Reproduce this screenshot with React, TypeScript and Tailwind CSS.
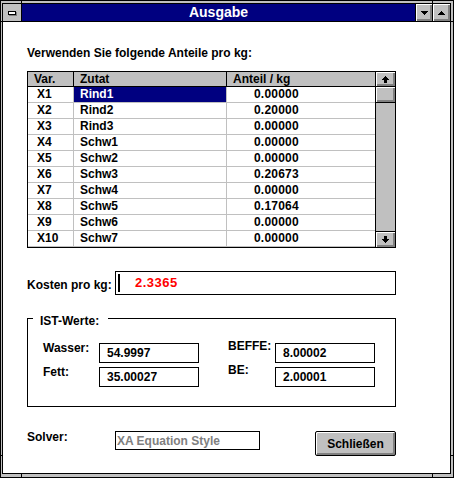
import React from "react";

const rows: [string, string, string][] = [
  ["X1", "Rind1", "0.00000"],
  ["X2", "Rind2", "0.20000"],
  ["X3", "Rind3", "0.00000"],
  ["X4", "Schw1", "0.00000"],
  ["X5", "Schw2", "0.00000"],
  ["X6", "Schw3", "0.20673"],
  ["X7", "Schw4", "0.00000"],
  ["X8", "Schw5", "0.17064"],
  ["X9", "Schw6", "0.00000"],
  ["X10", "Schw7", "0.00000"],
];

function ArrowUp() {
  return (
    <svg width="7" height="7" viewBox="0 0 7 7" shapeRendering="crispEdges">
      <rect x="3" y="0" width="1" height="1" fill="#000" />
      <rect x="2" y="1" width="3" height="1" fill="#000" />
      <rect x="1" y="2" width="5" height="1" fill="#000" />
      <rect x="0" y="3" width="7" height="1" fill="#000" />
      <rect x="2" y="4" width="3" height="3" fill="#000" />
    </svg>
  );
}

function ArrowDown() {
  return (
    <svg width="7" height="7" viewBox="0 0 7 7" shapeRendering="crispEdges">
      <rect x="2" y="0" width="3" height="3" fill="#000" />
      <rect x="0" y="3" width="7" height="1" fill="#000" />
      <rect x="1" y="4" width="5" height="1" fill="#000" />
      <rect x="2" y="5" width="3" height="1" fill="#000" />
      <rect x="3" y="6" width="1" height="1" fill="#000" />
    </svg>
  );
}

function TriDown() {
  return (
    <svg width="7" height="4" viewBox="0 0 7 4" shapeRendering="crispEdges">
      <rect x="0" y="0" width="7" height="1" fill="#000" />
      <rect x="1" y="1" width="5" height="1" fill="#000" />
      <rect x="2" y="2" width="3" height="1" fill="#000" />
      <rect x="3" y="3" width="1" height="1" fill="#000" />
    </svg>
  );
}

function TriUp() {
  return (
    <svg width="7" height="4" viewBox="0 0 7 4" shapeRendering="crispEdges">
      <rect x="3" y="0" width="1" height="1" fill="#000" />
      <rect x="2" y="1" width="3" height="1" fill="#000" />
      <rect x="1" y="2" width="5" height="1" fill="#000" />
      <rect x="0" y="3" width="7" height="1" fill="#000" />
    </svg>
  );
}

const bevel =
  "bg-[#c0c0c0] shadow-[inset_1px_1px_0_#ffffff,inset_-1px_-1px_0_#808080,inset_-2px_-2px_0_#808080]";

export default function App() {
  return (
    <div className="relative w-[454px] h-[478px] border border-black bg-[#c0c0c0] pt-[2px] pl-[1px] pr-[2px] pb-[3px] font-['Liberation_Sans',Arial,sans-serif] font-bold text-[12px] leading-[14px] text-black">
      {/* frame ticks */}
      <div className="absolute left-[20px] top-[-1px] w-px h-[4px] bg-black" />
      <div className="absolute left-[431px] top-[-1px] w-px h-[4px] bg-black" />
      <div className="absolute left-[20px] bottom-[-1px] w-px h-[4px] bg-black" />
      <div className="absolute left-[431px] bottom-[-1px] w-px h-[4px] bg-black" />
      <div className="absolute left-[-1px] top-[20px] w-[3px] h-px bg-black" />
      <div className="absolute right-[-1px] top-[20px] w-[4px] h-px bg-black" />
      <div className="absolute left-[-1px] top-[454px] w-[3px] h-px bg-black" />
      <div className="absolute right-[-1px] top-[454px] w-[4px] h-px bg-black" />

      <div className="h-full border border-black flex flex-col bg-white">
        {/* title bar */}
        <div className="flex h-[18px] border-b border-black shrink-0">
          <div className="w-[19px] bg-[#c0c0c0] border-r border-black flex items-center justify-center">
            <div className="w-[8px] h-[4px] border border-black bg-white shadow-[1px_1px_0_#808080]" />
          </div>
          <div className="flex-1 bg-[#000080] text-white text-[14px] leading-[17px] flex items-center justify-center">
            Ausgabe
          </div>
          <div className="w-[17px] border-l border-black">
            <div className={`h-full flex items-center justify-center ${bevel}`}>
              <TriDown />
            </div>
          </div>
          <div className="w-[18px] border-l border-black">
            <div className={`h-full flex items-center justify-center ${bevel}`}>
              <TriUp />
            </div>
          </div>
        </div>

        {/* content */}
        <div className="flex flex-col pl-[24px] pt-[24px]">
          <div>Verwenden Sie folgende Anteile pro kg:</div>

          {/* table */}
          <div className="mt-[11px] w-[369px] h-[177px] border border-black flex">
            <div className="flex flex-col w-[347px]">
              <div className="flex h-[15px] border-b border-black bg-[#c0c0c0] leading-[14px]">
                <div className="w-[46px] border-r border-black pl-[6px]">Var.</div>
                <div className="w-[153px] border-r border-black pl-[6px]">Zutat</div>
                <div className="w-[148px] pl-[6px]">Anteil / kg</div>
              </div>
              {rows.map(([v, z, a], i) => (
                <div
                  key={v}
                  className="flex h-[16px] border-b border-[#c0c0c0] leading-[15px]"
                >
                  <div className="w-[46px] border-r border-[#c0c0c0] pl-[9px]">{v}</div>
                  <div
                    className={`w-[153px] border-r border-[#c0c0c0] pl-[6px] ${
                      i === 0 ? "bg-[#000080] text-white" : ""
                    }`}
                  >
                    {z}
                  </div>
                  <div className="w-[148px] pl-[27px] tracking-[0.2px]">{a}</div>
                </div>
              ))}
            </div>
            {/* scrollbar */}
            <div className="flex-1 border-l border-black flex flex-col bg-[#c0c0c0]">
              <div className="h-[15px] border-b border-black">
                <div className={`h-full flex items-center justify-center ${bevel}`}>
                  <ArrowUp />
                </div>
              </div>
              <div className="h-[16px] border-b border-black">
                <div className={`h-full ${bevel}`} />
              </div>
              <div className="flex-1" />
              <div className="h-[16px] border-t border-black">
                <div className={`h-full flex items-center justify-center ${bevel}`}>
                  <ArrowDown />
                </div>
              </div>
            </div>
          </div>

          {/* Kosten */}
          <div className="mt-[23px] flex items-start">
            <div className="w-[88px] mt-[7px]">Kosten pro kg:</div>
            <div className="w-[281px] h-[24px] border border-black flex items-center">
              <div className="ml-[2px] w-[2px] h-[18px] bg-black" />
              <div className="ml-[15px] text-[#ff0000] text-[13px] tracking-[0.5px]">2.3365</div>
            </div>
          </div>

          {/* group box */}
          <div className="relative mt-[23px] w-[369px] h-[89px] border border-black pt-[24px] pl-[15px]">
            <div className="absolute left-[5px] top-[-5px] bg-white pl-[7px] pr-[9px]">IST-Werte:</div>
            <div className="grid grid-cols-[56px_100px_29px_47px_100px] auto-rows-[20px] gap-y-[4px]">
              <div className="mt-[-2px]">Wasser:</div>
              <div className="border border-black pl-[7px] flex items-center">54.9997</div>
              <div />
              <div className="mt-[-4px]">BEFFE:</div>
              <div className="border border-black pl-[7px] flex items-center">8.00002</div>
              <div className="mt-[-2px]">Fett:</div>
              <div className="border border-black pl-[7px] flex items-center">35.00027</div>
              <div />
              <div className="mt-[-4px]">BE:</div>
              <div className="border border-black pl-[7px] flex items-center">2.00001</div>
            </div>
          </div>

          {/* Solver */}
          <div className="mt-[24px] flex items-start">
            <div className="w-[88px] mt-[-1px]">Solver:</div>
            <div className="w-[145px] h-[19px] border border-black pl-[1px] flex items-center text-[#808080]">
              XA Equation Style
            </div>
            <button className="ml-[55px] w-[81px] h-[25px] border border-black rounded-[2px] bg-[#c0c0c0] shadow-[inset_1px_1px_0_#ffffff,inset_-1px_-1px_0_#808080,inset_-2px_-2px_0_#808080] font-bold text-[12px] leading-[14px]">
              Schließen
            </button>
          </div>
        </div>
      </div>
    </div>
  );
}
